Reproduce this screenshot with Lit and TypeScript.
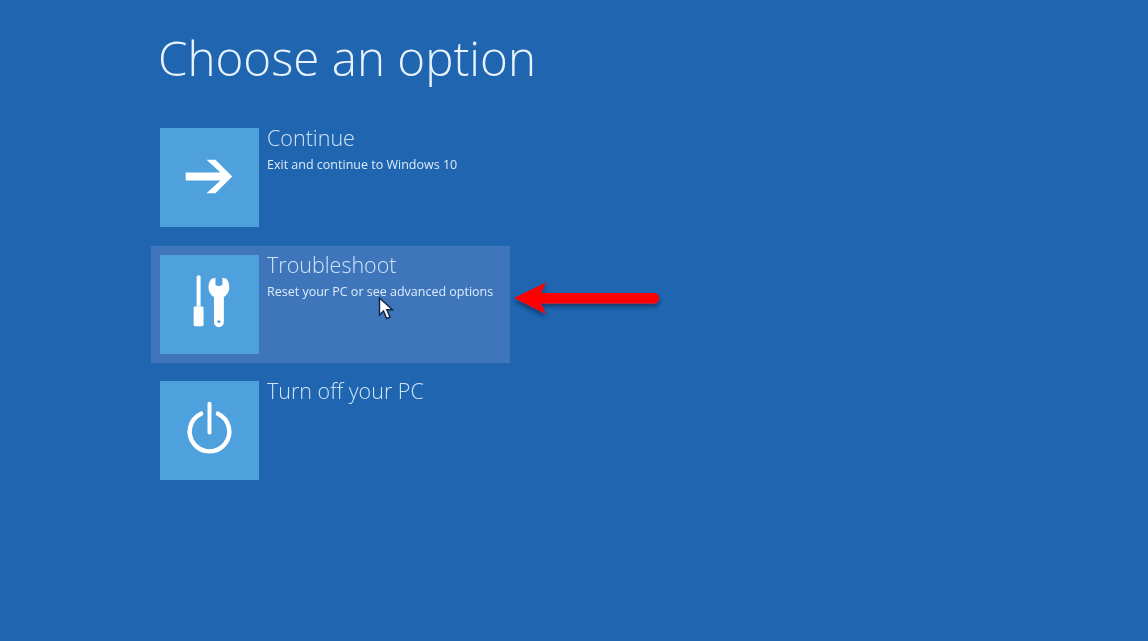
import { LitElement, html, css, svg } from 'lit';
import { customElement } from 'lit/decorators.js';

const arrowIcon = svg`<polygon points="47,32 56,32 73,49 56,66 47,66 61,53 26,53 26,45 61,45" fill="#fff"></polygon>`;

const toolsIcon = svg`
  <path d="M37 22.500a2 2 0 0 1 4 0V52h-4Z" fill="#fff"></path>
  <rect x="34" y="52" width="10" height="20" rx="1.500" fill="#fff"></rect>
  <path d="M52 24l4-1v7q3.500 3 7 0v-7l4 1c2 2.500 3 5 3 8.500 0 4.500-2.500 8-5.500 10V68a5 5 0 0 1-10 0V42.500c-3-2-5.500-5.500-5.500-10 0-3.500 1-6 3-8.500Z" fill="#fff"></path>
  <circle cx="59.500" cy="67.500" r="1.500" fill="#4ea1dc"></circle>`;

const powerIcon = svg`
  <path d="M41.500 33A20 20 0 1 0 58.500 33" fill="none" stroke="#fff" stroke-width="4.500" stroke-linecap="round"></path>
  <line x1="50" y1="23" x2="50" y2="52" stroke="#fff" stroke-width="4" stroke-linecap="round"></line>`;

@customElement('app-root')
export class AppRoot extends LitElement {
  static styles = css`
    :host {
      display: block;
    }

    .screen {
      position: relative;
      height: 641px;
      overflow: hidden;
      box-sizing: border-box;
      padding: 28px 0 0 151px;
      background-color: #1f65b0;
      font-family: 'Open Sans', 'Liberation Sans', sans-serif;
      color: #e4f0fb;
      filter: blur(0.35px);
    }

    h1 {
      margin: 0 0 32px 7px;
      font-size: 47.5px;
      line-height: 59px;
      font-weight: 300;
      color: #e8f2fc;
    }

    .options {
      display: flex;
      flex-direction: column;
      gap: 9.5px;
      width: 359px;
    }

    .option {
      display: flex;
      gap: 8px;
      height: 117px;
      box-sizing: border-box;
      padding: 9px 0 0 9px;
    }

    .option.active {
      background-color: #3f76bb;
    }

    .tile {
      flex: none;
      width: 99px;
      height: 99px;
      background-color: #4ea1dc;
    }

    .tile svg {
      display: block;
      width: 99px;
      height: 99px;
    }

    .name {
      margin-top: -1px;
      font-size: 21.5px;
      line-height: 22px;
      font-weight: 300;
      color: #cfe4f8;
    }

    .hint {
      margin-top: 8px;
      font-size: 12.5px;
      line-height: 16px;
      color: #dcebfa;
    }

    .pointer {
      position: absolute;
      left: 510px;
      top: 278px;
      width: 155px;
      height: 44px;
    }

    .cursor {
      position: absolute;
      left: 377px;
      top: 295px;
      width: 18px;
      height: 26px;
    }
  `;

  private options = [
    { name: 'Continue', hint: 'Exit and continue to Windows 10', icon: arrowIcon },
    { name: 'Troubleshoot', hint: 'Reset your PC or see advanced options', icon: toolsIcon, active: true },
    { name: 'Turn off your PC', hint: '', icon: powerIcon },
  ];

  render() {
    return html`
      <div class="screen">
        <h1>Choose an option</h1>
        <div class="options">
          ${this.options.map(
            (o) => html`
              <div class="option ${o.active ? 'active' : ''}">
                <div class="tile"><svg viewBox="0 0 100 100">${o.icon}</svg></div>
                <div>
                  <div class="name">${o.name}</div>
                  ${o.hint ? html`<div class="hint">${o.hint}</div>` : ''}
                </div>
              </div>
            `
          )}
        </div>

        <svg class="cursor" viewBox="0 0 18 26">
          <path d="M2.500 3v17l4-4 3.200 7.500 3.300-1.400-3.200-7.300h5.700Z" fill="#fff" stroke="#10243f" stroke-width="1.400"></path>
        </svg>

        <svg class="pointer" viewBox="0 0 155 44">
          <defs>
            <filter id="shade" x="-10%" y="-30%" width="120%" height="170%">
              <feDropShadow dx="0" dy="3" stdDeviation="2" flood-color="#0b2c55" flood-opacity="0.75"></feDropShadow>
            </filter>
          </defs>
          <path d="M4 20 36 4.500 31 15H144a5.250 5.250 0 0 1 0 10.500H31L36 36Z" fill="#fe0000" filter="url(#shade)"></path>
        </svg>
      </div>
    `;
  }
}

declare global {
  interface HTMLElementTagNameMap {
    'app-root': AppRoot;
  }
}
